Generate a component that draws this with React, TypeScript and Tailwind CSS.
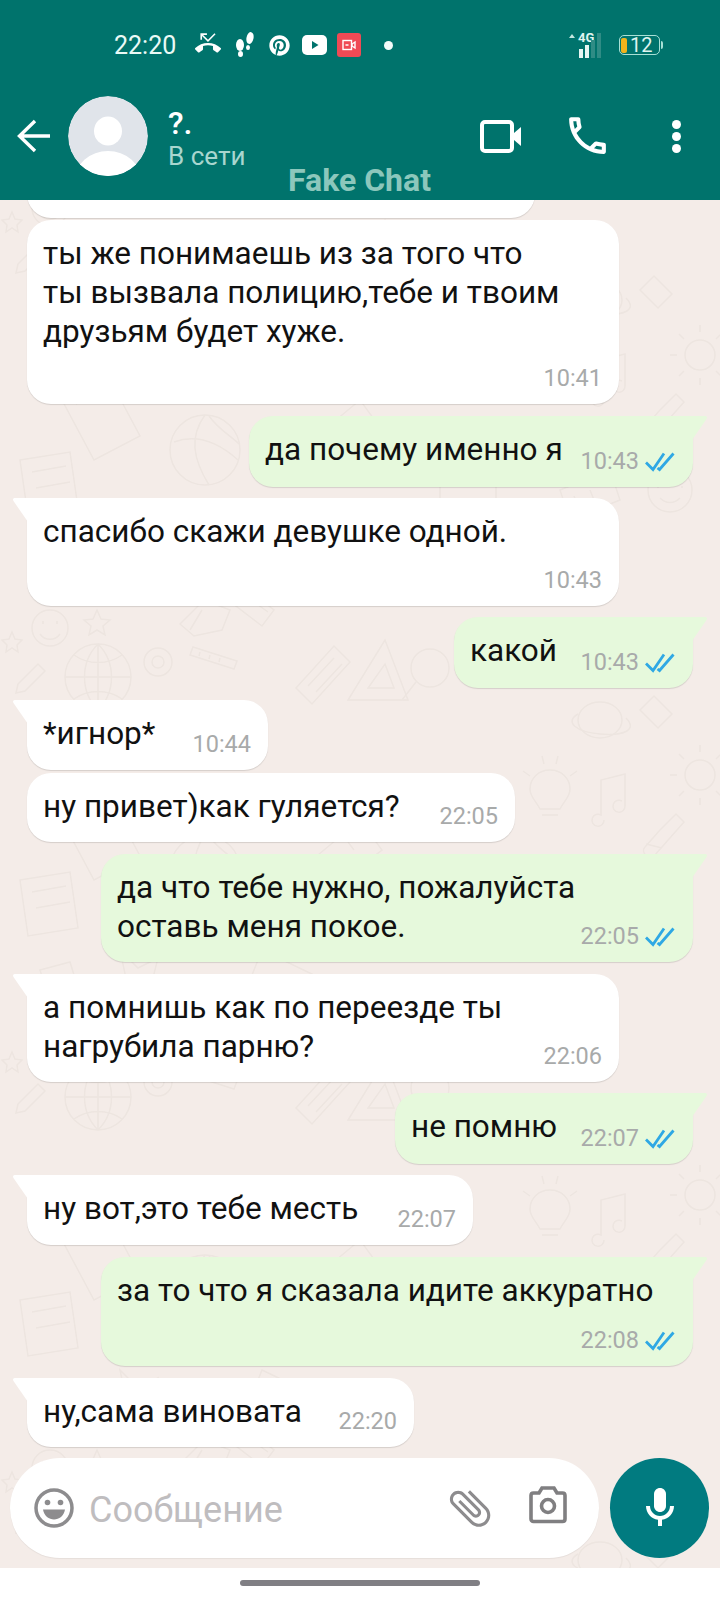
import React from "react";
import { FaPinterest } from "react-icons/fa";

type Message = {
  side: "in" | "out";
  lines: string[];
  time: string;
  width: string;
  height: string;
  gap: string;
  tail?: boolean;
};

const messages: Message[] = [
  { side: "in", lines: [], time: "10:39", width: "w-[508px]", height: "h-[108px]", gap: "mt-0" },
  { side: "in", lines: ["ты же понимаешь из за того что", "ты вызвала полицию,тебе и твоим", "друзьям будет хуже."], time: "10:41", width: "w-[592px]", height: "h-[184px]", gap: "mt-[2px]" },
  { side: "out", lines: ["да почему именно я"], time: "10:43", width: "w-[444px]", height: "h-[71px]", gap: "mt-[12px]", tail: true },
  { side: "in", lines: ["спасибо скажи девушке одной."], time: "10:43", width: "w-[592px]", height: "h-[108px]", gap: "mt-[11px]", tail: true },
  { side: "out", lines: ["какой"], time: "10:43", width: "w-[239px]", height: "h-[71px]", gap: "mt-[11px]", tail: true },
  { side: "in", lines: ["*игнор*"], time: "10:44", width: "w-[241px]", height: "h-[70px]", gap: "mt-[12px]", tail: true },
  { side: "in", lines: ["ну привет)как гуляется?"], time: "22:05", width: "w-[488px]", height: "h-[69px]", gap: "mt-[3px]" },
  { side: "out", lines: ["да что тебе нужно, пожалуйста", "оставь меня покое."], time: "22:05", width: "w-[592px]", height: "h-[108px]", gap: "mt-[12px]", tail: true },
  { side: "in", lines: ["а помнишь как по переезде ты", "нагрубила парню?"], time: "22:06", width: "w-[592px]", height: "h-[108px]", gap: "mt-[12px]", tail: true },
  { side: "out", lines: ["не помню"], time: "22:07", width: "w-[298px]", height: "h-[71px]", gap: "mt-[11px]", tail: true },
  { side: "in", lines: ["ну вот,это тебе месть"], time: "22:07", width: "w-[446px]", height: "h-[70px]", gap: "mt-[11px]", tail: true },
  { side: "out", lines: ["за то что я сказала идите аккуратно"], time: "22:08", width: "w-[592px]", height: "h-[109px]", gap: "mt-[12px]", tail: true },
  { side: "in", lines: ["ну,сама виновата"], time: "22:20", width: "w-[387px]", height: "h-[69px]", gap: "mt-[12px]", tail: true },
];

const Ticks = () => (
  <svg width="30" height="20" viewBox="0 0 30 20" fill="none" stroke="#2fa8e4" strokeWidth="2.800" className="ml-[6px] shrink-0">
    <path d="M1 10.500 8 17.500 19 1.500" />
    <path d="M12.500 16 14.500 17.500 28.500 1.500" />
  </svg>
);

const Bubble = ({ m }: { m: Message }) => {
  const out = m.side === "out";
  return (
    <div className={`relative shrink-0 pt-[14px] pl-[16px] shadow-[0_1px_1px_rgba(0,0,0,0.13)] rounded-[24px] ${m.width} ${m.height} ${m.gap} ${out ? "self-end mr-[27px] bg-[#e6f9dc]" : "self-start ml-[27px] bg-white"} ${m.tail ? (out ? "rounded-tr-none" : "rounded-tl-none") : ""}`}>
      {m.tail && (
        <svg width="16" height="24" viewBox="0 0 16 24" className={`absolute top-0 ${out ? "-right-[15px]" : "-left-[15px]"}`}>
          <path d={out ? "M0 0H13C15 0 15.500 1.500 14.500 3L0 24Z" : "M16 0H3C1 0 .5 1.500 1.500 3L16 24Z"} fill={out ? "#e6f9dc" : "#ffffff"} />
        </svg>
      )}
      {m.lines.map((line, idx) => (
        <div key={idx} className="h-[39px] whitespace-nowrap leading-[39px]">{line}</div>
      ))}
      <span className={`absolute bottom-[14px] flex items-center text-[23.500px] leading-[23px] text-[#a8aaaa] ${out ? "right-[18px]" : "right-[17px]"}`}>
        {m.time}
        {out && <Ticks />}
      </span>
    </div>
  );
};

const Doodles = () => (
  <svg className="absolute inset-0 h-full w-full" fill="none" stroke="#ede5e0" strokeWidth="1.500">
    <defs>
      <pattern id="doodle" x="0" y="-40" width="720" height="420" patternUnits="userSpaceOnUse">
        {/* smiley, globe, at sign */}
        <circle cx="50" cy="48" r="18" />
        <path d="M40 54c5 7 15 7 20 0M43 41v3M57 41v3" />
        <circle cx="98" cy="97" r="33" />
        <path d="M65 97h66M98 64v66M74 75c14 10 34 10 48 0M74 119c14-10 34-10 48 0M98 64c-18 18-18 48 0 66M98 64c18 18 18 48 0 66" />
        <circle cx="158" cy="82" r="14" />
        <circle cx="158" cy="82" r="6" />
        {/* pencil, ruler, stars */}
        <path d="M18 104 38 84l7 7-20 20-9 2z" />
        <path d="M193 67l44 14-3 8-44-14zM200 72l-1 4M210 75l-1 4M220 78l-1 4" />
        <path d="M97 30l4 9 9 1-7 6 2 9-8-5-8 5 2-9-7-6 9-1z" />
        <path d="M12 52l3 7 7 1-5 5 1 7-6-4-6 4 1-7-5-5 7-1z" />
        {/* notebook, set square, magnifier */}
        <path d="M296 108 334 66 350 82 312 124zM308 106l26-28M316 112l26-28" />
        <path d="M385 60 408 120H348zM385 84 394 108H368z" />
        <circle cx="430" cy="88" r="19" />
        <path d="M416 102 402 120" />
        <path d="M180 44l24-24 26 10-8 20-28 6zM190 50l12-20" />
        <path d="M248 10l26 20-12 16-26-20zM254 22l14 10" />
        {/* planet, bulb, note, sun, tube */}
        <ellipse cx="600" cy="140" rx="22" ry="18" />
        <path d="M578 134c-14 8-2 18 22 20s38-4 26-16" />
        <path d="M550 190c-12 0-20 9-20 19 0 8 6 12 10 20h20c4-8 10-12 10-20 0-10-8-19-20-19zM542 235h16M544 184l-2-8M556 184l2-8M530 196l-7-5M570 196l7-5" />
        <path d="M604 240a6 6 0 1 1-3-5V200l24-6v32a6 6 0 1 1-3-5" />
        <circle cx="700" cy="195" r="15" />
        <path d="M700 172v-7M700 218v7M677 195h-7M723 195h7M684 179l-5-5M716 179l5-5M684 211l-5 5M716 211l5 5" />
        <path d="M660 250l16-16 8 8-30 34c-5 5-14-4-9-9zM646 264l16 4" />
        <path d="M640 130l14-14 18 18-14 14z" />
        {/* ball, books and the rest of the sheet */}
        <circle cx="205" cy="290" r="35" />
        <path d="M205 255c-16 22-12 44 4 70M174 282c22-8 44 0 64 18M209 256c10 14 22 20 30 28" />
        <path d="M62 240 108 216 140 276 94 300zM76 244 118 224" />
        <path d="M20 300 70 292 78 348 28 356zM32 312 66 306M36 328 70 322" />
        <path d="M300 290 360 240 382 270 322 316zM316 288l6 8M332 276l6 8M348 262l6 8" />
        <path d="M440 300h56v44h-56zM450 310h36M450 322h36" />
        <circle cx="670" cy="330" r="22" />
        <path d="M658 326v2M682 326v2M660 338c6 6 14 6 20 0" />
        <path d="M560 330 610 310 620 340 570 360zM574 336l4 10M590 330l4 10" />
        <path d="M262 370 316 396 296 418 250 400z" />
        <path d="M120 370l18 18 20-10-6 24-24 6zM40 390l30-8 8 26-30 8z" />
      </pattern>
    </defs>
    <rect width="100%" height="100%" fill="url(#doodle)" stroke="none" />
  </svg>
);

const StatusBar = () => (
  <div className="flex h-[90px] items-center pl-[114px] pr-[57px] text-white">
    <span className="w-[62px] text-[25px] leading-none text-[#eafaf6]">22:20</span>
    <svg width="26" height="26" viewBox="0 0 24 24" fill="#fff" className="ml-[19px] -translate-y-[2px]">
      <path d="M6.500 5.500 12 11l7-7-1-1-6 6-4.500-4.500H11V3H5v6h1.500V5.500zm17.210 11.170C20.660 13.780 16.540 12 12 12 7.460 12 3.340 13.780.290 16.670c-.180.180-.290.430-.290.710s.110.530.290.710l2.480 2.480c.180.180.430.290.710.290.270 0 .520-.110.700-.280.790-.740 1.690-1.360 2.660-1.850.330-.160.560-.500.560-.900v-3.100c1.450-.480 3-.730 4.600-.730s3.150.250 4.600.720v3.100c0 .390.230.740.560.900.980.490 1.870 1.120 2.670 1.850.180.180.430.280.700.280.280 0 .530-.110.710-.290l2.480-2.480c.180-.180.290-.430.290-.710s-.120-.520-.300-.700z" />
    </svg>
    <svg width="22" height="26" viewBox="0 0 22 26" fill="#fff" className="ml-[13px]">
      <ellipse cx="6" cy="13" rx="4" ry="6" />
      <ellipse cx="6.500" cy="22" rx="2.500" ry="3" />
      <ellipse cx="16" cy="6" rx="3.500" ry="6" transform="rotate(12 16 6)" />
      <ellipse cx="14" cy="15.500" rx="2" ry="2.500" />
    </svg>
    <FaPinterest className="ml-[13px] text-white" size={21} />
    <svg width="25" height="20" viewBox="0 0 25 20" className="ml-[12px]">
      <rect width="25" height="20" rx="5" fill="#fff" />
      <path d="M10 6 16.500 10 10 14Z" fill="#00736c" />
    </svg>
    <div className="ml-[10px] flex h-[24px] w-[24px] items-center justify-center rounded-[3px] bg-[#ef4a55]">
      <svg width="14" height="12" viewBox="0 0 14 12" fill="none" stroke="#fff" strokeWidth="1.400">
        <rect x="1" y="1.500" width="8.500" height="9" />
        <path d="M3.500 6h3M13 3v6l-3-2V5z" />
      </svg>
    </div>
    <span className="ml-[23px] h-[9px] w-[9px] rounded-full bg-[#f4fbf9]" />
    <div className="ml-auto flex items-center">
      <div className="relative h-[26px] w-[38px]">
        <span className="absolute left-0 top-[2px] h-0 w-0 border-x-[3px] border-b-[4px] border-x-transparent border-b-[#c3e6df]" />
        <span className="absolute left-[9px] -top-[1px] text-[13px] font-bold leading-none text-[#dff3ef]">4G</span>
        <div className="absolute bottom-0 left-[10px] flex items-end gap-[2px]">
          <span className="h-[9px] w-[4px] bg-[#e6f6f3]" />
          <span className="h-[13px] w-[4px] bg-[#e6f6f3]" />
          <span className="h-[18px] w-[4px] bg-[#2f8c85]" />
          <span className="h-[25px] w-[4px] bg-[#2f8c85]" />
        </div>
      </div>
      <div className="ml-[12px] flex h-[20px] w-[41px] items-center rounded-[5px] border-[1.500px] border-[#a8e0d6] pl-[1px]">
        <span className="h-[15px] w-[6px] rounded-[2px] bg-[#f0b41c]" />
        <span className="ml-[3px] text-[20px] leading-none text-[#dff3ef]">12</span>
      </div>
      <span className="ml-[1px] h-[8px] w-[2px] rounded-r bg-[#a8e0d6]" />
    </div>
  </div>
);

const NavBar = () => (
  <div className="flex h-[110px] items-start text-white">
    <svg width="36" height="36" viewBox="0 0 36 36" fill="none" stroke="#fff" strokeWidth="3.400" className="ml-[16px] mt-[28px]">
      <path d="M34 18H4M19 3 3.500 18 19 33" />
    </svg>
    <svg width="80" height="80" viewBox="0 0 80 80" className="ml-[16px] mt-[6px] rounded-full">
      <circle cx="40" cy="40" r="40" fill="#e0e4ea" />
      <ellipse cx="40" cy="35" rx="14" ry="14.500" fill="#fff" />
      <ellipse cx="40" cy="84" rx="33" ry="29" fill="#fff" />
    </svg>
    <div className="ml-[20px] mt-[14px]">
      <div className="text-[32px] font-medium leading-[38px] text-white">?.</div>
      <div className="text-[26px] leading-[28px] text-[#a8d6cf]">В сети</div>
    </div>
    <div className="ml-auto flex items-start">
      <svg width="42" height="33" viewBox="0 0 42 33" fill="none" className="mt-[30px]">
        <rect x="2" y="2" width="30" height="29" rx="3" stroke="#fff" strokeWidth="4" />
        <path d="M34 13 41 7V26L34 20Z" fill="#fff" />
      </svg>
      <svg width="49" height="49" viewBox="0 0 24 24" fill="#fff" className="ml-[41px] mt-[21px]">
        <path d="M6.540 5c.060.890.210 1.760.450 2.590l-1.200 1.200c-.410-1.200-.670-2.470-.760-3.790h1.510m9.860 12.020c.850.240 1.720.390 2.600.450v1.490c-1.320-.090-2.590-.350-3.800-.750l1.200-1.190M7.500 3H4c-.550 0-1 .450-1 1 0 9.390 7.610 17 17 17 .550 0 1-.450 1-1v-3.490c0-.550-.450-1-1-1-1.240 0-2.450-.200-3.570-.570-.100-.040-.210-.050-.310-.050-.260 0-.510.100-.710.290l-2.200 2.200c-2.830-1.450-5.150-3.760-6.590-6.590l2.200-2.200c.280-.280.360-.670.250-1.020C8.700 6.450 8.500 5.250 8.500 4c0-.550-.450-1-1-1z" />
      </svg>
      <div className="ml-[60px] mr-[39px] mt-[30px] flex flex-col gap-[3px]">
        <span className="h-[9px] w-[9px] rounded-full bg-white" />
        <span className="h-[9px] w-[9px] rounded-full bg-white" />
        <span className="h-[9px] w-[9px] rounded-full bg-white" />
      </div>
    </div>
  </div>
);

const Composer = () => (
  <div className="relative flex h-[100px] shrink-0 items-center justify-between pl-[10px] pr-[11px]">
    <div className="flex h-[100px] w-[589px] items-center rounded-[50px] bg-white shadow-[0_1px_1px_rgba(0,0,0,0.06)]">
      <svg width="40" height="40" viewBox="0 0 40 40" className="ml-[24px]" fill="none">
        <circle cx="20" cy="20" r="18" stroke="#8d8c8e" strokeWidth="3.500" />
        <circle cx="13.500" cy="14.500" r="2.800" fill="#8d8c8e" />
        <circle cx="26.500" cy="14.500" r="2.800" fill="#8d8c8e" />
        <path d="M9 21.500H31C30 28 25 31.500 20 31.500S10 28 9 21.500Z" fill="#8d8c8e" />
      </svg>
      <span className="ml-[15px] mt-[4px] text-[36px] leading-none text-[#bfbdbf]">Сообщение</span>
      <svg width="50" height="50" viewBox="0 0 24 24" fill="#8d8c8e" className="ml-auto -rotate-45">
        <path d="M16.500 6v11.500c0 2.210-1.790 4-4 4s-4-1.790-4-4V5c0-1.380 1.120-2.500 2.500-2.500s2.500 1.120 2.500 2.500v10.500c0 .550-.450 1-1 1s-1-.450-1-1V6H10v9.500c0 1.380 1.120 2.500 2.500 2.500s2.500-1.120 2.500-2.500V5c0-2.210-1.790-4-4-4S7 2.790 7 5v12.500c0 3.040 2.460 5.500 5.500 5.500s5.500-2.460 5.500-5.500V6h-1.500z" />
      </svg>
      <svg width="40" height="38" viewBox="0 0 40 38" fill="none" stroke="#807f81" strokeWidth="3.600" className="ml-[33px] mr-[31px] -translate-y-[3px]">
        <path d="M3 9.500C3 8 4 7 5.500 7H11L14 2H26L29 7H34.500C36 7 37 8 37 9.500V33C37 34.500 36 35.500 34.500 35.500H5.500C4 35.500 3 34.500 3 33Z" />
        <circle cx="20" cy="20" r="6.500" />
      </svg>
    </div>
    <div className="flex h-[100px] w-[99px] items-center justify-center rounded-full bg-[#017b80]">
      <svg width="48" height="48" viewBox="0 0 24 24" fill="#fff">
        <path d="M12 14c1.660 0 3-1.340 3-3V5c0-1.660-1.340-3-3-3S9 3.340 9 5v6c0 1.660 1.340 3 3 3z" />
        <path d="M17 11c0 2.760-2.240 5-5 5s-5-2.240-5-5H5c0 3.530 2.610 6.430 6 6.920V21h2v-3.080c3.390-.490 6-3.390 6-6.920h-2z" />
      </svg>
    </div>
  </div>
);

export default function App() {
  return (
    <div className="flex h-[1600px] w-[720px] flex-col overflow-hidden bg-white font-['Roboto',sans-serif] text-[31.500px] text-[#111]">
      <header className="relative z-10 h-[200px] shrink-0 bg-[#00736c]">
        <StatusBar />
        <NavBar />
        <span className="absolute left-[288px] top-[162px] text-[32px] font-bold leading-[37px] text-[#8cc7bc]">Fake Chat</span>
      </header>

      <main className="relative flex h-[1368px] shrink-0 flex-col overflow-hidden bg-[#f4ece8] pb-[10px]">
        <Doodles />
        <div className="relative flex min-h-0 flex-1 flex-col justify-end overflow-hidden pb-[11px]">
          {messages.map((m, idx) => (
            <Bubble key={idx} m={m} />
          ))}
        </div>
        <Composer />
      </main>

      <div className="flex flex-1 justify-center bg-white pt-[12px]">
        <span className="h-[6px] w-[240px] rounded-full bg-[#807f84]" />
      </div>
    </div>
  );
}
